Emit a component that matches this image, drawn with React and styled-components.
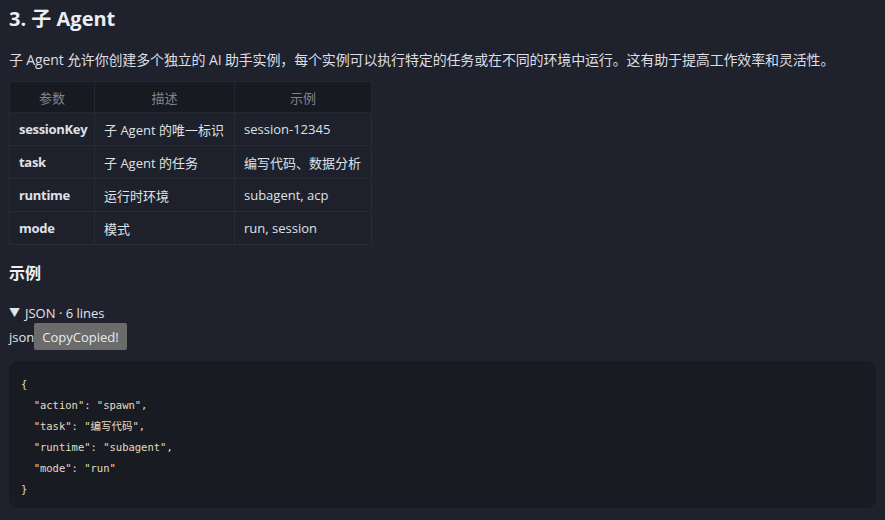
import React from "react";
import styled, { createGlobalStyle } from "styled-components";

const GlobalStyle = createGlobalStyle`
  html, body {
    margin: 0;
    padding: 0;
    background: #1f222d;
  }
  body {
    font-family: "Open Sans", "Noto Sans CJK SC", sans-serif;
    color: #e2e4e9;
  }
`;

const Page = styled.div`
  padding: 0 9px 0 9px;
  width: 867px;
`;

const Title = styled.h2`
  font-size: 20px;
  font-weight: 700;
  margin: 0;
  padding-top: 5px;
  line-height: 28px;
  color: #eceef2;
`;

const Para = styled.p`
  font-size: 14px;
  line-height: 20px;
  margin: 17px 0 11px;
  color: #dcdee4;
  letter-spacing: -0.15px;
`;

const Table = styled.table`
  border-collapse: collapse;
  table-layout: fixed;
  width: 362px;
  font-size: 13px;
`;

const Th = styled.th`
  background: #171a21;
  color: #80858f;
  font-weight: 400;
  height: 31px;
  padding: 0 9px;
  border: 1px solid #232731;
  text-align: center;
  box-sizing: border-box;
`;

const Td = styled.td`
  height: 32px;
  padding: 0 9px;
  border: 1px solid #272b36;
  background: #1e212b;
  color: #dfe1e6;
  font-weight: ${(p) => (p.$bold ? 700 : 400)};
  letter-spacing: ${(p) => (p.$bold ? "-0.3px" : "0")};
  white-space: nowrap;
  overflow: hidden;
`;

const SubTitle = styled.h3`
  font-size: 16px;
  font-weight: 700;
  margin: 17px 0 0;
  line-height: 22px;
  color: #eceef2;
`;

const Summary = styled.div`
  margin-top: 20px;
  font-size: 13px;
  line-height: 18px;
  display: flex;
  align-items: center;
  gap: 5px;
`;

const Caret = styled.span`
  font-size: 11px;
`;

const LangRow = styled.div`
  display: flex;
  align-items: center;
  font-size: 13px;
  margin-top: 1px;
`;

const CopyButton = styled.span`
  background: #6b6b6b;
  color: #eaeaea;
  font-size: 13px;
  padding: 0 8px;
  height: 27px;
  display: inline-flex;
  align-items: center;
  border-radius: 2px;
`;

const CodeBlock = styled.pre`
  margin: 11px 0 0;
  background: #181b22;
  border-radius: 9px;
  padding: 13px 12px 8px;
  font-family: "DejaVu Sans Mono", "Noto Sans CJK SC", monospace;
  font-size: 10.5px;
  line-height: 21px;
  color: #e6dcc2;
  white-space: pre;
`;

const rows = [
  ["sessionKey", "子 Agent 的唯一标识", "session-12345"],
  ["task", "子 Agent 的任务", "编写代码、数据分析"],
  ["runtime", "运行时环境", "subagent, acp"],
  ["mode", "模式", "run, session"],
];

const code = `{
  "action": "spawn",
  "task": "编写代码",
  "runtime": "subagent",
  "mode": "run"
}`;

export default function App() {
  return (
    <>
      <GlobalStyle />
      <Page>
        <Title>3. 子 Agent</Title>
        <Para>
          子 Agent 允许你创建多个独立的 AI 助手实例，每个实例可以执行特定的任务或在不同的环境中运行。这有助于提高工作效率和灵活性。
        </Para>
        <Table>
          <colgroup>
            <col style={{ width: 85 }} />
            <col style={{ width: 140 }} />
            <col style={{ width: 137 }} />
          </colgroup>
          <thead>
            <tr>
              <Th>参数</Th>
              <Th>描述</Th>
              <Th>示例</Th>
            </tr>
          </thead>
          <tbody>
            {rows.map((r) => (
              <tr key={r[0]}>
                <Td $bold>{r[0]}</Td>
                <Td>{r[1]}</Td>
                <Td>{r[2]}</Td>
              </tr>
            ))}
          </tbody>
        </Table>
        <SubTitle>示例</SubTitle>
        <Summary>
          <Caret>▼</Caret>
          <span>JSON · 6 lines</span>
        </Summary>
        <LangRow>
          <span>json</span>
          <CopyButton>CopyCopied!</CopyButton>
        </LangRow>
        <CodeBlock>{code}</CodeBlock>
      </Page>
    </>
  );
}
